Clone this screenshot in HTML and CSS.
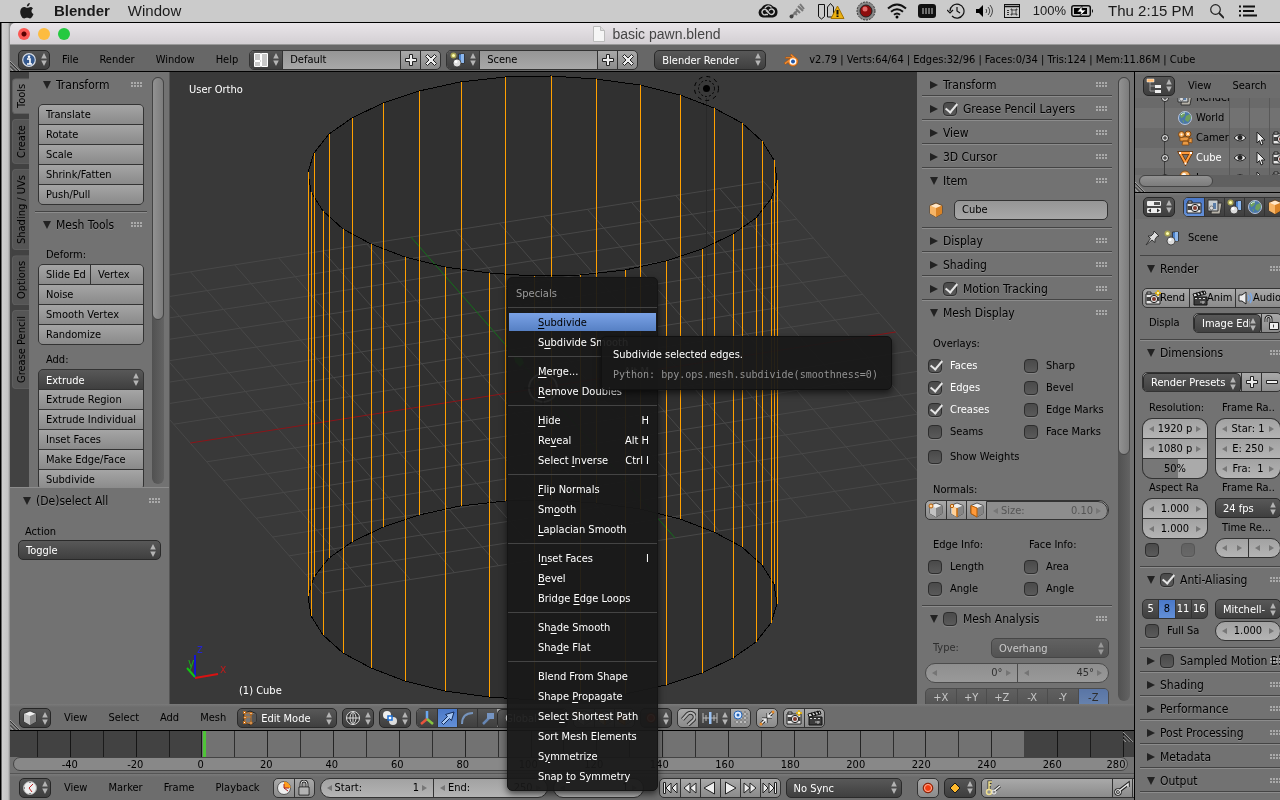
FILE: index.html
```html
<!DOCTYPE html>
<html lang="en">
<head>
<meta charset="utf-8">
<title>basic pawn.blend</title>
<link rel="stylesheet" href="styles.css">
</head>
<body>
<svg class="defs" aria-hidden="true">
  <symbol id="updown" viewBox="0 0 6 14"><path d="M3 0 6 6H0zM3 14 0 8h6z" fill="#b4b4b4"/></symbol>
  <symbol id="info" viewBox="0 0 16 16"><circle cx="8" cy="8" r="6.300" fill="#34598f" stroke="#d5dbe4" stroke-width="1.200"/><circle cx="8" cy="4.800" r="1.300" fill="#fff"/><path d="M6 7h3v5M6 12h5" stroke="#fff" stroke-width="1.600" fill="none"/></symbol>
  <symbol id="screen" viewBox="0 0 16 16"><path d="M1.500 1.500h6v7h-6zM1.500 9.500h6v5h-6zM8.500 1.500h6v13h-6z" fill="#c8c8c8" stroke="#fff"/></symbol>
  <symbol id="scene" viewBox="0 0 16 16"><path d="M8.500 2h6v9h-6z" fill="#4b83cf" stroke="#222" stroke-width=".7"/><path d="M11 2h3v9h-3z" fill="#8db7ec"/><circle cx="3.500" cy="3.500" r="3" fill="#a7a252"/><circle cx="3.500" cy="3.500" r="1.500" fill="#ffffb0"/><circle cx="7" cy="11" r="4" fill="#ddd" stroke="#222" stroke-width=".7"/><circle cx="6" cy="9.500" r="1.500" fill="#fff"/></symbol>
  <symbol id="plus" viewBox="0 0 16 16"><path d="M6.500 2.500h3v4h4v3h-4v4h-3v-4h-4v-3h4z" fill="#eee" stroke="#222"/></symbol>
  <symbol id="minus" viewBox="0 0 16 16"><path d="M2.500 6.500h11v3h-11z" fill="#eee" stroke="#222"/></symbol>
  <symbol id="cross" viewBox="0 0 16 16"><path d="m2.500 4.500 2-2L8 6l3.500-3.500 2 2L10 8l3.500 3.500-2 2L8 10l-3.500 3.500-2-2L6 8z" fill="#eee" stroke="#222"/></symbol>
  <symbol id="blender" viewBox="0 0 16 16"><path d="M1 11 7 6.500H2.500V5H9L7 3l1.500-1 6 5a5 5 0 1 1-9.300 3.500L2.500 12.500z" fill="#f18a2e" stroke="#9b4b0b" stroke-width=".5"/><circle cx="10" cy="9.500" r="3.300" fill="#fff"/><circle cx="10" cy="9.500" r="2" fill="#2558a8"/></symbol>
  <symbol id="cube" viewBox="0 0 16 16"><path d="m8 1 6 2.500v8L8 15l-6-3.500v-8z" fill="#f0f0f0" stroke="#222" stroke-width=".7"/><path d="m8 6 6-2.500v8L8 15z" fill="#858585"/><path d="m2 3.500 6 2.500v9l-6-3.500z" fill="#c2c2c2"/></symbol>
  <symbol id="ocube" viewBox="0 0 16 16"><path d="m8 1 6 2.500v8L8 15l-6-3.500v-8z" fill="#ffe7c8" stroke="#5c3207" stroke-width=".8"/><path d="m8 6 6-2.500v8L8 15z" fill="#d98326"/><path d="m2 3.500 6 2.500v9l-6-3.500z" fill="#f7b566"/></symbol>
  <symbol id="ncube" viewBox="0 0 16 16"><use href="#cube"/><circle cx="3" cy="4" r="2" fill="#ffd7a0" stroke="#b55c05"/></symbol>
  <symbol id="lcube" viewBox="0 0 16 16"><use href="#cube"/><path d="m3 4 5 2v9l-5-3z" fill="#ffd29a"/><path d="M8 6v9" stroke="#c96a0a" stroke-width="1.500"/><circle cx="3" cy="4" r="1.700" fill="#ffd7a0" stroke="#b55c05"/></symbol>
  <symbol id="fcube" viewBox="0 0 16 16"><use href="#cube"/><path d="m2 3.500 6 2.500v9l-6-3.500z" fill="#ff9a3a" stroke="#b55c05"/></symbol>
  <symbol id="edit" viewBox="0 0 16 16"><path d="m8 1 6 2.500v8L8 15l-6-3.500v-8z" fill="#777" stroke="#222"/><path d="m8 5 6-1.500v8L8 15z" fill="#555"/><path d="M3 3h6v10H3zM3 7h6" fill="none" stroke="#c47a30"/><g fill="#fff" stroke="#c46a10"><path d="M1.500 1.500h2v2h-2zM8 2.500h2v2H8zM1.500 11.500h2v2h-2zM8 12h2v2H8zM2 6.500h2v2H2z"/></g></symbol>
  <symbol id="wire" viewBox="0 0 16 16"><circle cx="8" cy="8" r="6.500" fill="#333" stroke="#ddd"/><path d="M8 1.500v13M1.500 8h13M8 1.500c-4 3-4 10 0 13M8 1.500c4 3 4 10 0 13" stroke="#ddd" fill="none"/></symbol>
  <symbol id="pivot" viewBox="0 0 16 16"><circle cx="5" cy="5" r="4" fill="#eee"/><circle cx="11" cy="11" r="4" fill="#ddd"/><path d="M6 6h4v4H6z" fill="#fff" stroke="#1b6fd6" stroke-width="1.500"/></symbol>
  <symbol id="manip" viewBox="0 0 16 16"><path d="M8 9V1" stroke="#6aa8f0" stroke-width="2.500"/><path d="m8 9-6 5" stroke="#e8543c" stroke-width="2.500"/><path d="m8 9 6 5" stroke="#86c440" stroke-width="2.500"/></symbol>
  <symbol id="arrow" viewBox="0 0 16 16"><path d="m1.500 12.500 6-6L5.500 4.500 14 2l-2.500 8.500-2-2-6 6z" fill="#a8c8f5" stroke="#122a58"/></symbol>
  <symbol id="arc" viewBox="0 0 16 16"><path d="M2 14C2 7 6 3 13 3" stroke="#7694bd" stroke-width="2" fill="none"/></symbol>
  <symbol id="scl" viewBox="0 0 16 16"><path d="m3 14 6-6" stroke="#6686b4" stroke-width="2.500"/><path d="M7 3h7v6H7z" fill="#7594c2"/></symbol>
  <symbol id="magnet" viewBox="0 0 16 16"><g fill="none"><path d="m2.500 9.500 5-5.500a4 4 0 0 1 6 6l-5.500 5" stroke="#333" stroke-width="4"/><path d="m2.500 9.500 5-5.500a4 4 0 0 1 6 6l-5.500 5" stroke="#b4b4b4" stroke-width="2"/></g></symbol>
  <symbol id="incr" viewBox="0 0 16 16"><path d="M1 3v10M4 5v6M12 5v6M15 3v10M1 8h14" stroke="#bbb" fill="none"/><path d="M7 2h2.500v12H7z" fill="#9cc4f5"/></symbol>
  <symbol id="snapgrid" viewBox="0 0 16 16"><path d="M1 4h14M1 8h14M1 12h14M4 1v14M8 1v14M12 1v14" stroke="#222" stroke-width="2"/><path d="M1 4h14M1 8h14M1 12h14M4 1v14M8 1v14M12 1v14" stroke="#eee"/><circle cx="5" cy="5" r="4" fill="#d8e8ff" stroke="#2264b8"/><circle cx="5" cy="5" r="1.500" fill="#2264b8"/></symbol>
  <symbol id="merge" viewBox="0 0 16 16"><path d="M14 2 9 7m0-4v4h4M2 14l5-5m-4 0h4v4" stroke="#222" stroke-width="3" fill="none"/><path d="M14 2 9 7m0-4v4h4M2 14l5-5m-4 0h4v4" stroke="#eee" stroke-width="1.500" fill="none"/><circle cx="14" cy="2" r="1.500" fill="#e78b2a"/><circle cx="2" cy="14" r="1.500" fill="#e78b2a"/></symbol>
  <symbol id="camera" viewBox="0 0 16 16"><path d="M1 4h14v10H1z" fill="#e8e8e8" stroke="#222"/><path d="M2 2h4v2H2z" fill="#ccc" stroke="#222"/><path d="M1.500 7h13v4h-13z" fill="#444"/><circle cx="9" cy="9" r="3.700" fill="#ddd" stroke="#222"/><circle cx="9" cy="9" r="2" fill="#823b30"/></symbol>
  <symbol id="render" viewBox="0 0 16 16"><use href="#camera"/><path d="m13 0 .9 2.100L16 3l-2.100.9L13 6l-.9-2.100L10 3l2.100-.9z" fill="#fff7ae" stroke="#e0ac00"/></symbol>
  <symbol id="clapper" viewBox="0 0 16 16"><path d="M2 7h13v8H2z" fill="#3c3c3c" stroke="#111"/><path d="m1 4 12-3 1 3L2 7z" fill="#ddd" stroke="#111"/><path d="m4 3 2 3m1-4 2 3m1-4 2 3" stroke="#111" stroke-width="1.500"/><path d="M3 8.500h11" stroke="#ddd" stroke-dasharray="2 2"/><path d="M8 12h5m-2-1v3" stroke="#bbb"/></symbol>
  <symbol id="tree" viewBox="0 0 16 16"><path d="M4 4v9h5M4 8h5" stroke="#999" fill="none"/><path d="M1 1h7v3H1z" fill="#ffba70" stroke="#fff" stroke-width=".5"/><path d="M9 7h6v3H9zM9 12h6v3H9z" fill="#eee"/></symbol>
  <symbol id="props" viewBox="0 0 16 16"><rect x="1" y="2" width="14" height="5" rx="1" fill="#eee"/><path d="M8 3h6v3H8z" fill="#555"/><rect x="1" y="9" width="14" height="5" rx="1" fill="#eee"/><path d="m5 9.500-3 2 3 2zm6 0 3 2-3 2z" fill="#333"/></symbol>
  <symbol id="layers" viewBox="0 0 16 16"><path d="M5 4h10l-2 11H4z" fill="#b6b2a8" stroke="#333"/><path d="M1 1h10v11H1z" fill="#c8ced2" stroke="#333"/><path d="M6 4h3v6H6z" fill="#5a7da8"/><circle cx="4.500" cy="9" r="2" fill="#ddd" stroke="#333" stroke-width=".5"/></symbol>
  <symbol id="world" viewBox="0 0 16 16"><circle cx="8" cy="8" r="6.500" fill="#4a78a8" stroke="#b9c4dc"/><path d="M3 5c2-3 5-3 5-1S5 8 4 8zM9 6l4-2 1 4-3 4-3-2zM5 10l2 1v2z" fill="#6fa05c"/><path d="M4 5c2-2 3-2 4-2" stroke="#e5f4ff" fill="none"/></symbol>
  <symbol id="movcam" viewBox="0 0 16 16"><path d="M3 7h9v4H3zM11 9l4-1v5l-4-1zM6 11h5l1 4H5z" fill="#e99a45" stroke="#7b420b" stroke-width=".7"/><circle cx="4.500" cy="4.500" r="3" fill="#f4ac5b" stroke="#7b420b"/><circle cx="11" cy="4" r="3" fill="#f4ac5b" stroke="#7b420b"/><circle cx="4.500" cy="4.500" r="1" fill="#fff"/><circle cx="11" cy="4" r="1" fill="#fff"/></symbol>
  <symbol id="mesh" viewBox="0 0 16 16"><path d="M3 3h11L8.500 13z" fill="none" stroke="#6a3100" stroke-width="3.500"/><path d="M3 3h11L8.500 13z" fill="none" stroke="#ff9b3e" stroke-width="2"/><path d="M2 2h2v2H2zM13 2h2v2h-2zM7.500 12.500h2v2h-2z" fill="#fff"/></symbol>
  <symbol id="lamp" viewBox="0 0 16 16"><circle cx="8" cy="6" r="5" fill="#f1ae63" stroke="#85501b"/><circle cx="7" cy="5" r="2" fill="#fff"/></symbol>
  <symbol id="eye" viewBox="0 0 16 16"><path d="M2 8q6-7 12 0-6 6-12 0" fill="#f3f3f3" stroke="#222"/><circle cx="8" cy="7.500" r="2.500" fill="#222"/></symbol>
  <symbol id="cursor" viewBox="0 0 16 16"><path d="M5 2v11l2.500-2.500L9 15l2-1-1.500-4H13z" fill="#eee" stroke="#222"/></symbol>
  <symbol id="expand" viewBox="0 0 10 10"><circle cx="5" cy="5" r="3.500" fill="#ddd" stroke="#222"/><path d="M3 5h4M5 3v4" stroke="#222"/></symbol>
  <symbol id="pin" viewBox="0 0 16 16"><path d="m10 1 5 5-2 .500-2 3v3L8 10l-6 5 4.500-6.500L4 6h3l2.500-2.500z" fill="#ddd" stroke="#333"/></symbol>
  <symbol id="speaker" viewBox="0 0 16 16"><path d="M1 5h3l4-3v12l-4-3H1z" fill="#eee" stroke="#222"/><path d="M10 5q2 3 0 6M12 3q3.500 5 0 10" stroke="#7ba8e5" fill="none" stroke-width="1.500"/></symbol>
  <symbol id="unlock" viewBox="0 0 16 16"><path d="M2 7V4a2.500 2.500 0 0 1 5 0v4" stroke="#222" stroke-width="3" fill="none"/><path d="M2 7V4a2.500 2.500 0 0 1 5 0v4" stroke="#ddd" fill="none"/><path d="M5.500 7.500h9v7h-9z" fill="#eee" stroke="#222"/><path d="M9.500 9.500v3" stroke="#444"/></symbol>
  <symbol id="lock" viewBox="0 0 16 16"><path d="M5 7V4a3 3 0 0 1 6 0v3" stroke="#333" stroke-width="3" fill="none"/><path d="M5 7V4a3 3 0 0 1 6 0v3" stroke="#ddd" fill="none"/><path d="M3 7h10v8H3z" fill="#ddd" stroke="#222"/><path d="M4 9h8M4 11h8M4 13h8" stroke="#888"/></symbol>
  <symbol id="clock" viewBox="0 0 16 16"><circle cx="8" cy="8" r="6.500" fill="#eee" stroke="#aaa"/><path d="m11 4-4 4 3 4" stroke="#b22" fill="none"/><path d="M8 2v1M8 13v1M2 8h1" stroke="#333"/></symbol>
  <symbol id="range" viewBox="0 0 16 16"><circle cx="8" cy="8" r="6.500" fill="#eee" stroke="#555"/><path d="M8 8V1.500A6.500 6.500 0 0 1 14.500 8z" fill="#ff9d1c"/><path d="M8 4v4h5M8 8l4 3" stroke="#a22" fill="none"/></symbol>
  <symbol id="first" viewBox="0 0 16 16"><path d="M1.500 2.500v11h2v-11zM9 3v10L4 8zM15 3v10l-5-5z" fill="#eee" stroke="#222"/></symbol>
  <symbol id="rew" viewBox="0 0 16 16"><path d="M8 3v10L2 8zM14 3v10L8 8z" fill="#eee" stroke="#222"/></symbol>
  <symbol id="back" viewBox="0 0 16 16"><path d="M12.500 2v12L2 8z" fill="#eee" stroke="#222"/></symbol>
  <symbol id="play" viewBox="0 0 16 16"><path d="M3.500 2v12L14 8z" fill="#eee" stroke="#222"/></symbol>
  <symbol id="fwd" viewBox="0 0 16 16"><path d="M2 3v10l6-5zM8 3v10l6-5z" fill="#eee" stroke="#222"/></symbol>
  <symbol id="last" viewBox="0 0 16 16"><path d="M12.500 2.500v11h2v-11zM7 3v10l5-5zM1 3v10l5-5z" fill="#eee" stroke="#222"/></symbol>
  <symbol id="rec" viewBox="0 0 16 16"><circle cx="8" cy="8" r="4.800" fill="#f03c10" stroke="#7a1a00"/><circle cx="8" cy="8" r="3.500" fill="none" stroke="#ffb59d"/></symbol>
  <symbol id="diamond" viewBox="0 0 16 16"><path d="m8 3 5 5-5 5-5-5z" fill="#ffba2d" stroke="#181818"/></symbol>
  <symbol id="keys" viewBox="0 0 16 16"><path d="M4 9V2h3M4 5h2" stroke="#333" stroke-width="3" fill="none"/><path d="M4 9V2h3M4 5h2" stroke="#f5e590" fill="none" stroke-width="1.500"/><circle cx="4" cy="12" r="2.500" fill="none" stroke="#f0e090" stroke-width="1.500"/><path d="m9 11 6-5" stroke="#333" stroke-width="3"/><path d="m9 11 6-5" stroke="#eee" stroke-width="1.500"/><circle cx="9" cy="12" r="2" fill="none" stroke="#eee"/></symbol>
  <symbol id="key" viewBox="0 0 16 16"><path d="m5 11 9-7v3" stroke="#222" stroke-width="3.500" fill="none"/><circle cx="4" cy="12" r="2.500" fill="#999" stroke="#222" stroke-width="2.500"/><path d="m5 11 9-7v3" stroke="#eee" stroke-width="1.500" fill="none"/><circle cx="4" cy="12" r="2.500" fill="none" stroke="#eee"/></symbol>
  <symbol id="corner" viewBox="0 0 12 12"><path d="M0 1 11 12M0 5l7 7M0 9l3 3" stroke="#bbb" fill="none"/><path d="M0 2 10 12M0 6l6 6" stroke="#222" fill="none"/></symbol>
</svg>

<header class="macbar">
  <svg class="apple" viewBox="0 0 14 16"><path d="M9.800 0c.1 1.500-1.200 3.300-2.900 3.400C6.700 1.800 8.200.2 9.800 0zM13 5.400c-2.300 1.500-1.900 4.600.5 5.600-.7 2-2.100 4.400-3.500 4.500-1.200 0-1.500-.7-2.900-.7s-1.800.7-2.900.7C1.900 15.400-.2 11 .3 8 .7 5.300 2.400 4 4.200 4c1.200 0 2.100.8 3.100.8.900 0 1.900-.9 3.400-.9.900 0 1.800.6 2.300 1.500z" fill="#1c1c1c"/></svg>
  <b>Blender</b><span class="macwin">Window</span>
  <div class="tray">
    <svg width="20" height="16" viewBox="0 0 20 16"><path d="M5 14.500a5 5 0 0 1-1.500-9.500A7 7 0 0 1 15 3.500a5.600 5.600 0 0 1 0 11z" fill="#111"/><g fill="none" stroke="#ccc" stroke-width="1.400"><path d="M10.500 9 8.500 7a2.700 2.700 0 1 0-.5 4.500h2"/><path d="m8 7.500 4 3.500a2.700 2.700 0 1 0 0-4.500L11 7.500"/><path d="M7 5q3-4 6.500-.500"/></g></svg>
    <svg width="17" height="16" viewBox="0 0 17 16"><path d="m2 14 6-6M5 9l3 3M7 6l4 4M9 3l5 5M11 1l4 5" stroke="#777" stroke-width="2" fill="none"/><circle cx="2.500" cy="13.500" r="2" fill="#444"/></svg>
    <svg width="28" height="18" viewBox="0 0 28 18"><path d="M1.500 2.500h6v12l-3 2.500-3-2.500zM10.500 15V5l3-3.500 3 3.500v10z" fill="none" stroke="#111"/><path d="M20.500 4 27 16.500H14z" fill="#ebb112" stroke="#a47200" stroke-linejoin="round"/><path d="M20.500 8v4.500m0 1v1.500" stroke="#111" stroke-width="2"/></svg>
    <svg width="20" height="20" viewBox="0 0 20 20"><circle cx="10" cy="10" r="9" fill="#888" stroke="#333" stroke-dasharray="2 1"/><circle cx="10" cy="10" r="6" fill="#8d0d0d" stroke="#222"/><circle cx="9" cy="8" r="2.500" fill="#e36a6a"/></svg>
    <svg width="20" height="16" viewBox="0 0 20 16"><g fill="none" stroke="#111" stroke-width="2"><path d="M1 5.500q9-8 18 0M4 8.800q6-5 12 0M7 11.800q3-2.500 6 0"/></g><circle cx="10" cy="14" r="1.500"/></svg>
    <svg width="18" height="14" viewBox="0 0 18 14"><rect width="18" height="14" rx="3" fill="#111"/><path d="M5 4v6m3-6v6m3-6v6m3-6v6" stroke="#ccc"/></svg>
    <svg width="18" height="16" viewBox="0 0 18 16"><path d="M3 8a7 7 0 1 1 2 5M10 4v4l3 2M0 7l3 3 3-3" fill="none" stroke="#111" stroke-width="1.200"/></svg>
    <svg width="17" height="14" viewBox="0 0 17 14"><path d="M0 5h3l4-4v12L3 9H0z"/><path d="M10 5q1.500 2 0 4M12 3q3.500 4 0 8M14 1q5 6 0 12" stroke="#444" fill="none"/></svg>
    <svg width="16" height="14" viewBox="0 0 16 14"><rect x=".500" y=".500" width="15" height="13" fill="none" stroke="#111"/><path d="M1 2.500h14" stroke="#111" stroke-width="1.500"/><path d="M3 6.500h2m-2 2h2m-2 2h2" stroke="#333"/><path d="M8 6h4v4H8zM8 6H7V5h1zM12 6h1V5h-1zM8 10H7v1h1zM12 10h1v1h-1z" fill="none" stroke="#333" stroke-width=".800"/></svg>
    <span>100%</span>
    <svg width="23" height="12" viewBox="0 0 23 12"><rect x=".800" y=".800" width="18.500" height="10.500" rx="2" fill="none" stroke="#111" stroke-width="1.500"/><path d="M3 3h13v6H3z"/><path d="m11 1-5 6h4l-1 4 6-6h-4z" fill="#fff" stroke="#111" stroke-width=".700"/><path d="M21 4v4q2-2 0-4"/></svg>
    <time>Thu 2:15 PM</time>
    <svg class="search" width="14" height="15" viewBox="0 0 14 15"><circle cx="5.500" cy="5.500" r="4.800" fill="none" stroke="#222" stroke-width="1.200"/><path d="m9 9 5 5" stroke="#222" stroke-width="1.800"/></svg>
    <svg width="18" height="12" viewBox="0 0 18 12"><path d="M0 1.500h2m2 0h12M0 6h2m2 0h11M0 10.500h2m2 0h14" stroke="#111" stroke-width="2"/></svg>
  </div>
</header>

<div class="window">
  <div class="titlebar">
    <i class="light red"></i><i class="light yellow"></i><i class="light green"></i>
    <h1><svg width="12" height="16" viewBox="0 0 12 16"><path d="M.500.500h7l4 4v11H.500z" fill="#f5f5f5" stroke="#bbb"/><path d="M7.500.500v4h4" fill="#ddd" stroke="#bbb"/></svg>basic pawn.blend</h1>
  </div>

  <div class="bar info-bar">
    <button class="editor" aria-label="Info editor"><svg><use href="#info"/></svg><svg class="ud"><use href="#updown"/></svg></button>
    <nav class="menus"><button>File</button><button>Render</button><button>Window</button><button>Help</button></nav>
    <div class="group idblock">
      <button class="editor" aria-label="Browse screen"><svg><use href="#screen"/></svg><svg class="ud"><use href="#updown"/></svg></button>
      <input aria-label="Screen" value="Default"><button class="sq" aria-label="Add screen"><svg><use href="#plus"/></svg></button><button class="sq" aria-label="Remove screen"><svg><use href="#cross"/></svg></button>
    </div>
    <div class="group idblock">
      <button class="editor" aria-label="Browse scene"><svg><use href="#scene"/></svg><svg class="ud"><use href="#updown"/></svg></button>
      <input aria-label="Scene" value="Scene"><button class="sq" aria-label="Add scene"><svg><use href="#plus"/></svg></button><button class="sq" aria-label="Remove scene"><svg><use href="#cross"/></svg></button>
    </div>
    <label class="select engine"><select aria-label="Render engine"><option>Blender Render</option></select><svg class="ud"><use href="#updown"/></svg></label>
    <svg class="logo"><use href="#blender"/></svg>
    <span class="stats">v2.79 | Verts:64/64 | Edges:32/96 | Faces:0/34 | Tris:124 | Mem:11.86M | Cube</span>
    <svg class="corner"><use href="#corner"/></svg>
  </div>

  <div class="workspace">
    <main class="main">
      <section class="view3d">
        <aside class="shelf">
          <div class="shelf-top">
            <div class="tabs"><button class="on">Tools</button><button>Create</button><button>Shading / UVs</button><button>Options</button><button>Grease Pencil</button></div>
            <div class="tools">
              <section class="panel"><h2 class="open">Transform</h2>
                <div class="stack"><button>Translate</button><button>Rotate</button><button>Scale</button><button>Shrink/Fatten</button><button>Push/Pull</button></div>
              </section>
              <section class="panel"><h2 class="open">Mesh Tools</h2>
                <p>Deform:</p>
                <div class="stack"><div class="pair"><button>Slide Ed</button><button>Vertex</button></div><button>Noise</button><button>Smooth Vertex</button><button>Randomize</button></div>
                <p class="add">Add:</p>
                <div class="stack"><label class="select"><select aria-label="Extrude"><option>Extrude</option></select><svg class="ud"><use href="#updown"/></svg></label><button>Extrude Region</button><button>Extrude Individual</button><button>Inset Faces</button><button>Make Edge/Face</button><button>Subdivide</button></div>
              </section>
            </div>
            <div class="scroll"><i class="thumb shelf-thumb"></i></div>
          </div>
          <section class="operator"><h2 class="open">(De)select All</h2>
            <label for="action">Action</label>
            <span class="select"><select id="action"><option>Toggle</option></select><svg class="ud"><use href="#updown"/></svg></span>
          </section>
        </aside>

        <div class="canvas">
          <svg viewBox="170 72 747 632" preserveAspectRatio="xMidYMid slice">
            <path fill="#303030" d="M308 172 314 153 329 134 352 118 383 103 419 91 460 82 505 77 551 76 596 79 640 85 680 95 714 108 742 123 762 141 774 160 777 180V604L771 623 756 642 733 658 702 673 666 685 625 694 580 699 534 700 489 697 445 691 405 681 371 668 343 653 323 635 311 616 308 597z"/>
            <g transform="matrix(44.100 -6.940 16.500 18.800 543 387.500)" fill="none">
              <path class="grid" d="M-8-8H8M-8-7H8M-8-6H8M-8-5H8M-8-4H8M-8-3H8M-8-2H8M-8-1H8M-8 1H8M-8 2H8M-8 3H8M-8 4H8M-8 5H8M-8 6H8M-8 7H8M-8 8H8M-8-8V8M-7-8V8M-6-8V8M-5-8V8M-4-8V8M-3-8V8M-2-8V8M-1-8V8M1-8V8M2-8V8M3-8V8M4-8V8M5-8V8M6-8V8M7-8V8M8-8V8"/>
              <path class="axis-x" d="M-8 0H8"/><path class="axis-y" d="M0-8V8"/>
            </g>
            <path d="M706.500 98V336" stroke="#292929"/>
            <g class="crisp" fill="none" stroke="#000">
              <path id="ring" d="M551 76 596 79 640 85 680 95 714 108 742 123 762 141 774 160 777 180 771 199 756 218 733 234 702 249 666 261 625 270 580 275 534 276 489 273 445 267 405 257 371 244 343 229 323 211 311 192 308 172 314 153 329 134 352 118 383 103 419 91 460 82 505 77z"/>
              <use href="#ring" y="424"/>
            </g>
            <path class="edges crisp" d="M551.500 76v424M596.500 79v424M640.500 85v424M680.500 95v424M714.500 108v424M742.500 123v424M762.500 141v424M774.500 160v424M777.500 180v424M771.500 199v424M756.500 218v424M733.500 234v424M702.500 249v424M666.500 261v424M625.500 270v424M580.500 275v424M534.500 276v424M489.500 273v424M445.500 267v424M405.500 257v424M371.500 244v424M343.500 229v424M323.500 211v424M311.500 192v424M308.500 172v424M314.500 153v424M329.500 134v424M352.500 118v424M383.500 103v424M419.500 91v424M461.500 82v424M505.500 77v424"/>
            <g fill="none" stroke="#000"><circle cx="706.500" cy="88.500" r="8" stroke-dasharray="2 2"/><circle cx="706.500" cy="88.500" r="12" stroke-dasharray="4 4"/></g><circle cx="706.500" cy="88.500" r="3.500"/>
            <path d="m514 357 8 1 2 5-4 4-5-5z" fill="#1ea01e"/>
            <circle cx="543" cy="388" r="14" fill="none" stroke="#fff" stroke-width="2"/><circle cx="543" cy="388" r="9" fill="none" stroke="#c33" stroke-dasharray="4 3"/><path d="M524 388h10m18 0h10M543 369v10m0 18v10" stroke="#000"/>
            <g fill="none" stroke-width="2"><path d="M195 678v-23" stroke="#1212d8"/><path d="m195 678 23-4" stroke="#d81212"/><path d="m195 677-8-9" stroke="#12c412"/></g>
            <g class="axes"><text x="197" y="653" fill="#2424d0">z</text><text x="188" y="667" fill="#18b018">y</text><text x="220" y="673" fill="#b81c1c">x</text></g>
            <g class="viewtext"><text x="189" y="93">User Ortho</text><text x="239" y="694">(1) Cube</text></g>
          </svg>
        </div>

        <aside class="npanel">
          <div class="npanels">
            <section class="panel"><h2>Transform</h2></section>
            <section class="panel"><h2><input type="checkbox" checked aria-label="Grease Pencil Layers">Grease Pencil Layers</h2></section>
            <section class="panel"><h2>View</h2></section>
            <section class="panel"><h2>3D Cursor</h2></section>
            <section class="panel"><h2 class="open">Item</h2><div class="item"><svg class="ic"><use href="#ocube"/></svg><input aria-label="Item name" value="Cube"></div></section>
            <section class="panel"><h2>Display</h2></section>
            <section class="panel"><h2>Shading</h2></section>
            <section class="panel"><h2><input type="checkbox" checked aria-label="Motion Tracking">Motion Tracking</h2></section>
            <section class="panel"><h2 class="open">Mesh Display</h2>
              <div class="display">
                <p>Overlays:</p>
                <div class="two">
                  <label class="lit"><input type="checkbox" checked>Faces</label><label><input type="checkbox">Sharp</label>
                  <label class="lit"><input type="checkbox" checked>Edges</label><label><input type="checkbox">Bevel</label>
                  <label class="lit"><input type="checkbox" checked>Creases</label><label><input type="checkbox">Edge Marks</label>
                  <label><input type="checkbox">Seams</label><label><input type="checkbox">Face Marks</label>
                </div>
                <div class="two weights"><label><input type="checkbox">Show Weights</label></div>
                <p class="normals">Normals:</p>
                <div class="group normal-row"><button class="sq" aria-label="Vertex normals"><svg><use href="#ncube"/></svg></button><button class="sq" aria-label="Loop normals"><svg><use href="#lcube"/></svg></button><button class="sq" aria-label="Face normals"><svg><use href="#fcube"/></svg></button><label class="num right faded"><span>Size:</span><input value="0.10"></label></div>
                <div class="two infos"><p>Edge Info:</p><p>Face Info:</p><label><input type="checkbox">Length</label><label><input type="checkbox">Area</label><label><input type="checkbox">Angle</label><label><input type="checkbox">Angle</label></div>
              </div>
            </section>
            <section class="panel"><h2 class="open"><input type="checkbox" aria-label="Mesh Analysis">Mesh Analysis</h2>
              <div class="analysis">
                <div class="type"><label for="mtype">Type:</label><span class="select"><select id="mtype"><option>Overhang</option></select><svg class="ud"><use href="#updown"/></svg></span></div>
                <div class="numrow"><label class="num left"><input aria-label="Minimum" value="0°"></label><label class="num right"><input aria-label="Maximum" value="45°"></label></div>
                <div class="group axis"><button>+X</button><button>+Y</button><button>+Z</button><button>-X</button><button>-Y</button><button class="on">-Z</button></div>
              </div>
            </section>
          </div>
          <div class="scroll"><i class="thumb npanel-thumb"></i></div>
        </aside>
      </section>

      <div class="bar view-bar">
        <button class="editor" aria-label="3D View editor"><svg><use href="#cube"/></svg><svg class="ud"><use href="#updown"/></svg></button>
        <nav class="menus"><button>View</button><button>Select</button><button>Add</button><button>Mesh</button></nav>
        <label class="select mode"><svg class="ic"><use href="#edit"/></svg><select aria-label="Mode"><option>Edit Mode</option></select><svg class="ud"><use href="#updown"/></svg></label>
        <button class="editor" aria-label="Viewport shading"><svg><use href="#wire"/></svg><svg class="ud"><use href="#updown"/></svg></button>
        <button class="editor" aria-label="Pivot point"><svg><use href="#pivot"/></svg><svg class="ud"><use href="#updown"/></svg></button>
        <div class="group orient"><button class="sq dark" aria-label="Manipulator"><svg><use href="#manip"/></svg></button><button class="sq on" aria-label="Translate"><svg><use href="#arrow"/></svg></button><button class="sq dark" aria-label="Rotate"><svg><use href="#arc"/></svg></button><button class="sq dark" aria-label="Scale"><svg><use href="#scl"/></svg></button><label class="select"><select aria-label="Orientation"><option>Global</option></select></label></div>
        <div class="group"><button class="sq" aria-label="Vertex select"><svg><use href="#ncube"/></svg></button><button class="sq" aria-label="Edge select"><svg><use href="#lcube"/></svg></button><button class="sq" aria-label="Face select"><svg><use href="#fcube"/></svg></button></div>
        <button class="editor" aria-label="Proportional editing"><svg><use href="#rec"/></svg><svg class="ud"><use href="#updown"/></svg></button>
        <div class="group"><button class="sq" aria-label="Snap"><svg><use href="#magnet"/></svg></button><button class="editor" aria-label="Snap element"><svg><use href="#incr"/></svg><svg class="ud"><use href="#updown"/></svg></button><button class="sq" aria-label="Grid snap"><svg><use href="#snapgrid"/></svg></button></div>
        <div class="group"><button class="sq" aria-label="Auto merge"><svg><use href="#merge"/></svg></button></div>
        <div class="group"><button class="sq" aria-label="Render"><svg><use href="#render"/></svg></button><button class="sq" aria-label="Render animation"><svg><use href="#clapper"/></svg></button></div>
        <svg class="corner"><use href="#corner"/></svg>
      </div>

      <section class="timeline">
        <svg class="track" viewBox="10 0 1124 26" preserveAspectRatio="none"><path fill="#424242" d="M10 0h192v26H10zM1024 0h110v26h-110z"/><path class="minor" d="M37.500 0v26M103.500 0v26M169.500 0v26M234.500 0v26M300.500 0v26M366.500 0v26M432.500 0v26M498.500 0v26M563.500 0v26M629.500 0v26M695.500 0v26M761.500 0v26M827.500 0v26M893.500 0v26M958.500 0v26M1090.500 0v26"/><path class="major" d="M70.500 0v26M136.500 0v26M201.500 0v26M267.500 0v26M333.500 0v26M399.500 0v26M465.500 0v26M531.500 0v26M596.500 0v26M662.500 0v26M728.500 0v26M794.500 0v26M860.500 0v26M925.500 0v26M991.500 0v26M1057.500 0v26M1123.500 0v26"/><path d="M203 0h3v26h-3z" fill="#4fc438"/></svg>
        <svg class="corner tl-corner"><use href="#corner"/></svg>
        <div class="ruler"><span>-40</span><span>-20</span><span>0</span><span>20</span><span>40</span><span>60</span><span>80</span><span>100</span><span>120</span><span>140</span><span>160</span><span>180</span><span>200</span><span>220</span><span>240</span><span>260</span><span>280</span></div>
      </section>

      <div class="bar time-bar">
        <button class="editor" aria-label="Timeline editor"><svg><use href="#clock"/></svg><svg class="ud"><use href="#updown"/></svg></button>
        <nav class="menus"><button>View</button><button>Marker</button><button>Frame</button><button>Playback</button></nav>
        <div class="group after"><button class="sq" aria-label="Preview range"><svg><use href="#range"/></svg></button><button class="sq" aria-label="Lock time cursor"><svg><use href="#lock"/></svg></button></div>
        <div class="numrow startend"><label class="num left"><span>Start:</span><input value="1"></label><label class="num right"><span>End:</span><input value="250"></label></div>
        <label class="num left right cur"><input aria-label="Current frame" value="1"></label>
        <div class="group play"><button class="sq" aria-label="Jump to start"><svg><use href="#first"/></svg></button><button class="sq" aria-label="Previous keyframe"><svg><use href="#rew"/></svg></button><button class="sq" aria-label="Play backwards"><svg><use href="#back"/></svg></button><button class="sq" aria-label="Play"><svg><use href="#play"/></svg></button><button class="sq" aria-label="Next keyframe"><svg><use href="#fwd"/></svg></button><button class="sq" aria-label="Jump to end"><svg><use href="#last"/></svg></button></div>
        <label class="select sync"><select aria-label="Sync"><option>No Sync</option></select><svg class="ud"><use href="#updown"/></svg></label>
        <div class="group rec"><button class="sq" aria-label="Auto keying"><svg><use href="#rec"/></svg></button></div>
        <button class="editor" aria-label="Keyframe type"><svg><use href="#diamond"/></svg><svg class="ud"><use href="#updown"/></svg></button>
        <div class="group keying"><button class="keyset" aria-label="Keying set"><svg><use href="#keys"/></svg></button><button class="sq" aria-label="Insert keyframe"><svg><use href="#key"/></svg></button><button class="sq" aria-label="Delete keyframe"><svg><use href="#key"/><path d="m1 1 9 9" stroke="#d33" stroke-width="2"/></svg></button></div>
      </div>
    </main>

    <aside class="side">
      <div class="bar side-bar"><button class="editor" aria-label="Outliner editor"><svg><use href="#tree"/></svg><svg class="ud"><use href="#updown"/></svg></button><nav class="menus"><button>View</button><button>Search</button></nav></div>
      <div class="outliner">
        <ul>
          <li><svg class="ex"><use href="#expand"/></svg><svg class="ic"><use href="#layers"/></svg><span>RenderLayers</span><i></i><i></i><i></i></li>
          <li><svg class="ex"></svg><svg class="ic"><use href="#world"/></svg><span>World</span><i></i><i></i><i></i></li>
          <li><svg class="ex"><use href="#expand"/></svg><svg class="ic"><use href="#movcam"/></svg><span>Camera</span><i><svg><use href="#eye"/></svg></i><i><svg><use href="#cursor"/></svg></i><i><svg><use href="#camera"/></svg></i></li>
          <li class="lit"><svg class="ex"><use href="#expand"/></svg><svg class="ic"><use href="#mesh"/></svg><span>Cube</span><i><svg><use href="#eye"/></svg></i><i><svg><use href="#cursor"/></svg></i><i><svg><use href="#camera"/></svg></i></li>
          <li><svg class="ex"><use href="#expand"/></svg><svg class="ic"><use href="#lamp"/></svg><span>Lamp</span><i><svg><use href="#eye"/></svg></i><i><svg><use href="#cursor"/></svg></i><i><svg><use href="#camera"/></svg></i></li>
        </ul>
        <div class="hscroll"><i></i></div>
        <svg class="corner"><use href="#corner"/></svg>
      </div>
      <div class="bar side-bar props-bar"><button class="editor" aria-label="Properties editor"><svg><use href="#props"/></svg><svg class="ud"><use href="#updown"/></svg></button><div class="group contexts"><button class="sq on" aria-label="Render"><svg><use href="#camera"/></svg></button><button class="sq dark" aria-label="Layers"><svg><use href="#layers"/></svg></button><button class="sq dark" aria-label="Scene"><svg><use href="#scene"/></svg></button><button class="sq dark" aria-label="World"><svg><use href="#world"/></svg></button><button class="sq dark" aria-label="Object"><svg><use href="#ocube"/></svg></button></div></div>
      <div class="properties">
        <div class="crumb"><svg class="ic"><use href="#pin"/></svg><svg class="ic"><use href="#scene"/></svg>Scene</div>
        <section class="panel"><h2 class="open">Render</h2>
          <div class="pbody"><div class="group renders"><button><svg><use href="#render"/></svg>Rend</button><button><svg><use href="#clapper"/></svg>Anim</button><button><svg><use href="#speaker"/></svg>Audio</button></div>
          <div class="displa"><label for="disp">Displa</label><div class="group"><span class="select"><select id="disp"><option>Image Edi</option></select><svg class="ud"><use href="#updown"/></svg></span><button class="sq" aria-label="Lock interface"><svg><use href="#unlock"/></svg></button></div></div></div>
        </section>
        <section class="panel"><h2 class="open">Dimensions</h2>
          <div class="pbody">
            <div class="group presets"><span class="select"><select aria-label="Render Presets"><option>Render Presets</option></select><svg class="ud"><use href="#updown"/></svg></span><button class="sq" aria-label="Add preset"><svg><use href="#plus"/></svg></button><button class="sq" aria-label="Remove preset"><svg><use href="#minus"/></svg></button></div>
            <div class="cols">
              <div><p>Resolution:</p><div class="numstack"><label class="num"><input aria-label="Resolution X" value="1920 p"></label><label class="num"><input aria-label="Resolution Y" value="1080 p"></label><label class="num percent"><input aria-label="Percentage" value="50%"></label></div><p>Aspect Ra</p><div class="numstack"><label class="num"><input aria-label="Aspect X" value="1.000"></label><label class="num"><input aria-label="Aspect Y" value="1.000"></label></div><div class="checks"><input type="checkbox" aria-label="Border"><input type="checkbox" disabled aria-label="Crop"></div></div>
              <div><p>Frame Ra..</p><div class="numstack"><label class="num"><input aria-label="Start frame" value="Star: 1"></label><label class="num"><input aria-label="End frame" value="E: 250"></label><label class="num"><input aria-label="Frame step" value="Fra:  1"></label></div><p>Frame Ra..</p><span class="select"><select aria-label="Frame rate"><option>24 fps</option></select><svg class="ud"><use href="#updown"/></svg></span><p>Time Re...</p><div class="numrow"><label class="num left"><input aria-label="Remap old" value=""></label><label class="num right"><input aria-label="Remap new" value=""></label></div></div>
            </div>
          </div>
        </section>
        <section class="panel"><h2 class="open"><input type="checkbox" checked aria-label="Anti-Aliasing">Anti-Aliasing</h2>
          <div class="pbody"><div class="cols aa"><div><div class="group samples"><button>5</button><button class="on">8</button><button>11</button><button>16</button></div><label class="full"><input type="checkbox">Full Sa</label></div><div><span class="select"><select aria-label="Filter"><option>Mitchell-</option></select><svg class="ud"><use href="#updown"/></svg></span><label class="num left right size"><input aria-label="Filter size" value="1.000"></label></div></div></div>
        </section>
        <section class="panel"><h2><input type="checkbox" aria-label="Sampled Motion Blur">Sampled Motion Blur</h2></section>
        <section class="panel"><h2>Shading</h2></section>
        <section class="panel"><h2>Performance</h2></section>
        <section class="panel"><h2>Post Processing</h2></section>
        <section class="panel"><h2>Metadata</h2></section>
        <section class="panel"><h2 class="open">Output</h2></section>
      </div>
    </aside>
  </div>
</div>

<div class="popup" role="menu">
  <h3>Specials</h3>
  <div><button class="on"><u>S</u>ubdivide</button><button>S<u>u</u>bdivide Smooth</button></div>
  <div><button><u>M</u>erge...<kbd>Alt M</kbd></button><button><u>R</u>emove Doubles</button></div>
  <div><button><u>H</u>ide<kbd>H</kbd></button><button>Re<u>v</u>eal<kbd>Alt H</kbd></button><button>Select <u>I</u>nverse<kbd>Ctrl I</kbd></button></div>
  <div><button><u>F</u>lip Normals</button><button>Sm<u>o</u>oth</button><button><u>L</u>aplacian Smooth</button></div>
  <div><button>I<u>n</u>set Faces<kbd>I</kbd></button><button><u>B</u>evel</button><button>Bridge <u>E</u>dge Loops</button></div>
  <div><button>Sh<u>a</u>de Smooth</button><button>Sha<u>d</u>e Flat</button></div>
  <div><button>Blend From Shape</button><button>Shape <u>P</u>ropagate</button><button>Sele<u>c</u>t Shortest Path</button><button>Sort Mesh Elements</button><button>S<u>y</u>mmetrize</button><button>Snap <u>t</u>o Symmetry</button></div>
</div>
<div class="tooltip" role="tooltip"><p>Subdivide selected edges.</p><code>Python: bpy.ops.mesh.subdivide(smoothness=0)</code></div>
</body>
</html>
```

FILE: styles.css
```css
* { box-sizing: border-box; margin: 0; padding: 0; }
body {
  height: 100vh; display: flex; flex-direction: column; overflow: hidden;
  background: linear-gradient(90deg, #000 1px, #cfcfcf 2px, #c4c4c4 8px, #8a8a8a 10px);
  font: 11px/20px "DejaVu Sans Condensed", "DejaVu Sans", sans-serif; color: #000;
}
.defs { position: absolute; width: 0; height: 0; }
button, input, select { font: inherit; color: inherit; border: 0; background: none; min-width: 0; }
button { white-space: nowrap; overflow: hidden; }
svg { flex: none; display: block; }
ul { list-style: none; }

.macbar { flex: none; height: 23px; background: #cbcbcb; border-bottom: 1px solid #000; display: flex; align-items: center; padding: 0 23px 0 20px; font: 15px/22px "Liberation Sans", sans-serif; color: #1a1a1a; }
.apple { width: 14px; height: 16px; margin-right: 20px; }
.macwin { margin-left: 18px; }
.tray { margin-left: auto; display: flex; align-items: center; gap: 11px; }
.tray span { font-size: 13px; margin: 0 -6px 0 2px; }
.tray time { margin-left: 3px; margin-right: 5px; }
.tray .search { margin-right: 4px; }

.window { flex: 1; min-height: 0; margin-left: 10px; display: flex; flex-direction: column; background: #727272; border-top-left-radius: 5px; overflow: hidden; }
.titlebar { flex: none; height: 22px; display: flex; align-items: center; gap: 8px; padding-left: 8px; background: linear-gradient(#e9e5e9, #d3cfd3); border-bottom: 1px solid #999; }
.light { width: 12px; height: 12px; border-radius: 50%; }
.red { background: radial-gradient(circle, #5a0000 2px, #fc5753 3px); }
.yellow { background: #fdbc40; }
.green { background: #24c940; }
.titlebar h1 { flex: 1; display: flex; justify-content: center; align-items: center; gap: 7px; font: 14px/20px "Liberation Sans", sans-serif; color: #444; padding-right: 44px; }

.bar { flex: none; height: 27px; display: flex; align-items: center; padding-left: 9px; background: linear-gradient(#7a7a7a, #6d6d6d 3px); position: relative; }
.info-bar { background: #676767; border-bottom: 1px solid #000; padding: 3px 0 0 8px; }
.bar svg, .sq svg { width: 16px; height: 16px; }
.bar svg.ud, svg.ud { width: 6px; height: 13px; }
.bar svg.corner, svg.corner { position: absolute; left: 0; bottom: 0; width: 11px; height: 11px; }
.menus { display: flex; margin: 0 3px 0 2px; }
.menus button { padding: 0 10px 0 11px; }
.info-bar .menus { margin: 0 -1px 0 1px; }
.editor { flex: none; width: 32px; height: 20px; display: flex; align-items: center; justify-content: center; gap: 4px; background: linear-gradient(#555, #3e3e3e); border: 1px solid #262626; border-radius: 5px; }
.group { display: flex; flex: none; height: 20px; border: 1px solid #333; border-radius: 5px; overflow: hidden; background: linear-gradient(#a9a9a9, #8b8b8b); }
.group > * { border-radius: 0; height: 18px; line-height: 18px; border: 0; }
.group > * + * { border-left: 1px solid #333; }
.sq { width: 20px; flex: none; display: flex; align-items: center; justify-content: center; }
.dark { background: linear-gradient(#555, #3f3f3f); }
.on.sq, .group .on { background: linear-gradient(#4a78c8, #6390d8); }
.idblock { width: 192px; margin-left: 2px; margin-right: 2px; }
.idblock + .idblock { margin-left: 3px; }
.idblock input { flex: 1; padding-left: 7px; background: linear-gradient(#969696, #a8a8a8); }
.select { display: flex; align-items: center; height: 20px; position: relative; border: 1px solid #2a2a2a; border-radius: 5px; background: linear-gradient(#585858, #3f3f3f); color: #fff; padding-right: 4px; }
.select select { appearance: none; flex: 1; height: 18px; padding-left: 7px; text-overflow: clip; }
.engine { width: 112px; margin-left: 14px; }
.logo { margin-left: 17px; }
.stats { margin-left: 10px; white-space: nowrap; }

.workspace { flex: 1; min-height: 0; display: grid; grid-template-columns: 1fr 146px; }
.main { min-width: 0; min-height: 0; display: flex; flex-direction: column; }
.view3d { flex: 1; min-height: 0; display: grid; grid-template-columns: 160px 1fr 217px; }
.shelf { min-height: 0; display: flex; flex-direction: column; border-right: 1px solid #555; background: #727272; }
.shelf-top { flex: 1; min-height: 0; display: flex; overflow: hidden; }
.tabs { width: 19px; flex: none; background: #424242; display: flex; flex-direction: column; gap: 5px; padding: 6px 0 0 2px; }
.tabs button { writing-mode: vertical-rl; transform: rotate(180deg); background: #555; width: 17px; line-height: 17px; padding: 5px 0; border: 1px solid #5f5f5f; border-left: 0; border-radius: 0 4px 4px 0; }
.tabs .on { background: #727272; }
.tools { flex: 1; padding: 0 5px 0 6px; min-width: 0; }
.scroll { width: 12px; flex: none; margin: 5px 5px 3px 0; border-radius: 6px; background: linear-gradient(90deg, #515151, #636363); }
.thumb { display: block; border-radius: 6px; border: 1px solid #444; background: linear-gradient(90deg, #929292, #7c7c7c); }
.shelf-thumb { height: 243px; }
.npanel-thumb { height: 378px; }
h2 { position: relative; display: flex; align-items: center; height: 23px; padding: 2px 0 0 11px; font-size: 12px; font-weight: 400; line-height: 20px; white-space: nowrap; text-shadow: 0 1px #8a8a8a; }
h2::before { content: ""; width: 0; height: 0; border: solid transparent; border-width: 4px 0 4px 8px; border-left-color: #222; margin-right: 5px; margin-left: -3px; }
h2.open::before { border-width: 8px 4px 0; border-color: #222 transparent transparent; }
h2::after { content: ""; position: absolute; right: 5px; top: 10px; width: 11px; height: 5px; background: radial-gradient(circle at 1px 1px, #aaa 0 1px, transparent 1px) 0 0 / 3px 3px; }
.panel { border-bottom: 1px solid #444; box-shadow: 0 1px #8c8c8c; }
.tools .panel:first-child { padding-bottom: 6px; }
.tools p { padding: 10px 0 0 11px; height: 29px; }
.tools .add { padding-top: 5px; height: 24px; }
.stack { margin: 0 3px; display: flex; flex-direction: column; border: 1px solid #333; border-radius: 5px; overflow: hidden; background: #333; gap: 1px; }
.tools .panel:first-child .stack { margin-top: 9px; }
.stack button { flex: none; height: 19px; line-height: 19px; padding-left: 7px; text-align: left; background: linear-gradient(#a5a5a5, #8a8a8a); }
.stack .select { height: 19px; flex: none; border: 0; border-radius: 0; }
.pair { display: grid; grid-template-columns: 51px 1fr; gap: 1px; }
.operator { flex: none; height: 217px; padding: 0 8px; border-top: 1px solid #8c8c8c; }
.operator h2 { margin: 0 -4px; }
.operator h2::before { margin-left: -2px; }
.operator > label { display: block; padding: 11px 0 0 7px; height: 29px; }
.canvas { background: #393939; min-width: 0; min-height: 0; overflow: hidden; }
.canvas svg { width: 100%; height: 100%; }
.grid { stroke: #484848; }
.axis-x { stroke: #8c1418; }
.axis-y { stroke: #14701a; }
.grid, .axis-x, .axis-y { vector-effect: non-scaling-stroke; }
.crisp { shape-rendering: crispEdges; }
.edges { stroke: #ffa000; }
.viewtext { fill: #fff; }
.axes { font-size: 12px; }

.npanel { min-height: 0; display: flex; background: #727272; overflow: hidden; }
.npanels { flex: 1; min-width: 0; padding: 0 6px 0 5px; overflow: hidden; }
.npanel .scroll { margin-right: 4px; }
input[type=checkbox] { appearance: none; flex: none; width: 14px; height: 14px; border: 1px solid #2d2d2d; border-radius: 4px; background: linear-gradient(#4a4a4a, #5a5a5a); position: relative; box-shadow: 0 1px #858585; }
input[type=checkbox]:checked::after { content: ""; position: absolute; left: 4px; top: -2px; width: 5px; height: 10px; border: solid #e6e6e6; border-width: 0 2px 2px 0; transform: rotate(40deg); }
input[type=checkbox]:disabled { opacity: .4; }
h2 input { margin-right: 6px; }
.item { display: flex; gap: 10px; align-items: center; padding: 9px 4px 7px 6px; }
.ic { width: 16px; height: 16px; }
.item input { flex: 1; height: 20px; border: 1px solid #333; border-radius: 5px; background: linear-gradient(#969696, #a8a8a8); padding-left: 7px; }
.display { padding: 11px 3px 5px; }
.display p { padding-left: 8px; height: 21px; }
.two { display: grid; grid-template-columns: 96px 1fr; padding-left: 3px; }
.two label { display: flex; align-items: center; gap: 8px; height: 22px; white-space: nowrap; }
.two p { padding-left: 5px; }
.lit { color: #fff; }
.weights { margin-top: 3px; }
.display .normals { margin-top: 12px; height: 20px; }
.normal-row { border-radius: 5px 10px 10px 5px; }
.num { position: relative; display: flex; align-items: center; flex: 1; min-width: 0; height: 20px; padding: 0 14px; border: 1px solid #333; background: linear-gradient(#a2a2a2, #b4b4b4); }
.num input { flex: 1; width: 20px; text-align: right; }
.num::before, .num::after { content: ""; position: absolute; left: 6px; border: solid transparent; border-width: 3px 5px 3px 0; border-right-color: #777; }
.num::after { left: auto; right: 6px; border-width: 3px 0 3px 5px; border-left-color: #777; }
.left { border-radius: 10px 0 0 10px; }
.right { border-radius: 0 10px 10px 0; }
.left.right { border-radius: 10px; }
.faded { color: #555; background: #8d8d8d; }
.infos { margin-top: 15px; }
.numrow { display: flex; }
.numrow .right { margin-left: -1px; }
.analysis { padding: 9px 3px 0; opacity: .6; }
.analysis .type { display: grid; grid-template-columns: 58px 1fr; padding-left: 8px; margin-bottom: 5px; }
.axis { margin-top: 5px; background: linear-gradient(#555, #3f3f3f); color: #fff; border-radius: 5px 5px 0 0; }
.axis button { flex: 1; }
.axis .on { color: #000; }

.view-bar { border-bottom: 1px solid #000; gap: 5px; padding-top: 2px; }
.view-bar .menus { margin: 0 -2px 0 -3px; }
.view-bar .mode { width: 100px; margin-left: -2px; }
.mode .ic { margin-left: 4px; }
.mode select { padding-left: 3px; }
.orient .select { width: 70px; }
.timeline { flex: none; height: 43px; position: relative; background: #727272; border-bottom: 1px solid #555; }
.track { width: 100%; height: 26px; }
.minor { stroke: #666; }
.major { stroke: #505050; }
.track path[class] { mix-blend-mode: multiply; }
svg.tl-corner { left: auto; right: 0; top: 0; }
.ruler { height: 14px; margin: 0 6px 0 3px; border: 1px solid #444; border-radius: 7px; background: #888; display: grid; grid-template-columns: repeat(16, minmax(0, 1fr)) 42px; padding-left: 23px; line-height: 13px; white-space: nowrap; overflow: hidden; text-align: center; }
.ruler span:last-child { width: 62px; }
.time-bar { overflow: hidden; height: 26px; padding-top: 1px; }
.after { margin-right: 5px; }
.startend { width: 228px; flex: none; }
.cur { flex: none; width: 91px; margin: 0 15px 0 5px; }
.play { margin-right: 5px; }
.sync { width: 116px; margin-right: 15px; flex: none; }
.rec { margin-right: 5px; }
.keying { margin-left: 5px; }
.keyset { width: 130px; padding-left: 3px; }

.side { min-width: 0; min-height: 0; border-left: 1px solid #000; display: flex; flex-direction: column; overflow: hidden; background: #727272; }
.side-bar { height: 26px; padding: 1px 0 0 8px; }
.side-bar .menus { margin: 0 0 0 2px; }
.outliner { flex: none; height: 95px; border-bottom: 1px solid #000; overflow: hidden; position: relative; }
.outliner ul { height: 77px; overflow: hidden; }
.outliner li { display: flex; align-items: center; height: 20px; padding-left: 25px; background: linear-gradient(#3c3c3c, #3c3c3c) 29px 0 / 1px 100% no-repeat; }
.outliner li:first-child { margin-top: -10px; }
.outliner li:nth-child(odd) { background-color: #6a6a6a; }
.outliner .ex { width: 10px; height: 10px; margin-right: 7px; }
.outliner span { width: 33px; height: 20px; margin-left: 3px; flex: none; overflow: hidden; }
.outliner i { width: 20px; height: 20px; padding: 2px; border-left: 1px solid #595959; flex: none; }
.outliner i svg { width: 16px; height: 16px; }
.hscroll { height: 12px; margin-left: 4px; background: #606060; border-radius: 6px 0 0 6px; }
.hscroll i { display: block; width: 74px; height: 12px; border: 1px solid #444; border-radius: 6px; background: linear-gradient(#929292, #7c7c7c); }
.contexts { margin-left: 8px; }
.properties { flex: 1; min-height: 0; overflow: hidden; padding-left: 5px; width: 150px; }
.crumb { display: flex; align-items: center; gap: 4px; height: 37px; padding: 2px 0 0 4px; border-bottom: 1px solid #444; }
.crumb .ic + .ic { margin-right: 4px; }
.properties h2 { padding-left: 10px; }
.properties h2::after { right: 4px; }
.pbody { padding: 9px 0 6px 2px; white-space: nowrap; }
.renders { width: 150px; }
.renders button { width: 46px; display: flex; align-items: center; padding-left: 2px; }
.renders svg { width: 16px; height: 16px; margin-right: -1px; }
.displa { display: grid; grid-template-columns: 44px 1fr; margin-top: 5px; padding-left: 7px; }
.displa .select { width: 67px; }
.presets .select { width: 98px; }
.displa .group, .presets { width: max-content; }
.cols { display: grid; grid-template-columns: 66px 66px; gap: 7px; }
.presets + .cols { margin: 6px 0 2px; }
.cols p { padding-left: 7px; }
.numstack { border: 1px solid #333; border-radius: 10px; overflow: hidden; display: flex; flex-direction: column; gap: 1px; background: #333; margin-bottom: -1px; }
.numstack .num { flex: none; border: 0; height: 19px; padding: 0 10px; }
.numstack .num input { text-align: center; }
.cols .num { padding: 0 10px; }
.cols .numstack .percent { background: linear-gradient(90deg, #777 55%, #aaa 55%); }
.percent::before, .percent::after { display: none; }
.checks { display: flex; gap: 22px; padding: 5px 3px 0; }
.samples { background: linear-gradient(#585858, #3f3f3f); color: #fff; }
.samples button { flex: 1; }
.group .on { color: #000; }
.full { display: flex; align-items: center; gap: 8px; padding-left: 3px; margin-top: 1px; height: 21px; }
.size { margin-top: 2px; }
.size input { text-align: center; }

.popup { position: absolute; left: 507px; top: 277px; width: 151px; border-radius: 5px; background: rgba(24, 24, 24, .94); border: 1px solid #151515; box-shadow: 0 3px 7px rgba(0, 0, 0, .6); color: #fff; }
.popup h3 { font-size: 11px; font-weight: 400; color: #9b9b9b; height: 29px; padding: 6px 8px 0; }
.popup div { border-top: 1px solid #444; padding: 4px 1px; }
.popup button { display: flex; width: 100%; height: 20px; line-height: 20px; padding: 1px 7px 0 29px; align-items: center; white-space: pre; }
.popup u { text-underline-offset: 2px; }
.popup .on { color: #000; background: linear-gradient(#7aa2e6, #5680c4) 0 1px / 100% 18px no-repeat; }
.popup kbd { margin-left: auto; font: inherit; }
.tooltip { position: absolute; left: 601px; top: 336px; width: 291px; height: 54px; padding: 8px 11px; border-radius: 5px; background: rgba(24, 24, 24, .94); border: 1px solid #111; box-shadow: 0 3px 7px rgba(0, 0, 0, .6); color: #fff; }
.tooltip code { display: block; font: 10px/20px "DejaVu Sans Mono", monospace; color: #929292; white-space: nowrap; }
```
